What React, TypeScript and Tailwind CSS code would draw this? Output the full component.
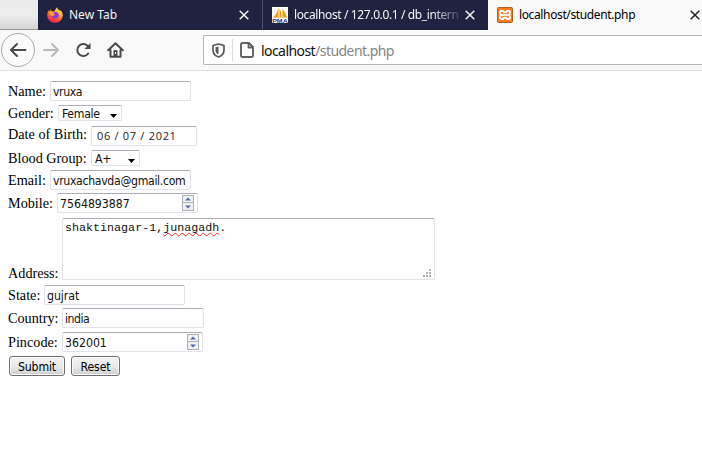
import type { ReactNode } from 'react';

const ui = "font-['Noto_Sans',sans-serif]";
const tahoma = "font-['DejaVu_Sans_Condensed','DejaVu_Sans',sans-serif] text-[12.2px]";
const box = 'box-border shrink-0 rounded-[2px] border border-[#e2e3ea] border-t-[#abadb3] bg-white text-[#111] whitespace-pre';

function Close({ dark = false }: { dark?: boolean }) {
  return (
    <svg className="shrink-0" width="10" height="10" viewBox="0 0 10 10" stroke={dark ? '#222' : '#f2f2f5'} strokeWidth="1.5">
      <path d="M.7.7 9.3 9.3M9.3.7.7 9.3" />
    </svg>
  );
}

function FirefoxLogo() {
  return (
    <svg className="shrink-0" width="16" height="16" viewBox="0 0 16 16">
      <defs>
        <linearGradient id="flame" x1="0.8" y1="0" x2="0.3" y2="1">
          <stop offset="0" stopColor="#fff04a" />
          <stop offset="0.4" stopColor="#ffa52e" />
          <stop offset="0.7" stopColor="#ff5130" />
          <stop offset="1" stopColor="#f5156c" />
        </linearGradient>
      </defs>
      <path fill="url(#flame)" d="M1.6 3.2 2.5 4.4 4 2.2 4.4 4.2 7.3 4.5C8 3 9 1.2 10.1.2c.2 1.5 1.3 2.2 2.2 3.1L13.7 3.6C15 5 15.8 6.600 15.800 8.500A7.800 7.400 0 0 1 .2 8.400C.2 6.600.800 4.800 1.600 3.200Z" />
      <path fill="#7542e5" d="M5.200 6.200 7.400 5.100C9.800 4.200 12 6.200 11.700 8.500 11.400 11 8.700 12 6.500 11 4.900 10.300 4.200 9 4.400 7.500Z" />
      <path fill="#ff9b2f" d="M2.500 6C4 4.200 6.200 4.500 7.500 5.200L6.300 6.300 8.200 7.400C7.700 8.200 6.500 8.400 5.700 9 4.500 9.600 3.300 8.200 2.500 6Z" />
    </svg>
  );
}

function PmaLogo() {
  return (
    <svg className="shrink-0" width="16" height="16" viewBox="0 0 16 16">
      <path fill="#fff" d="M0 0h16v16H0z" />
      <path fill="#f89c0e" d="M6.500 1V10H1.500C3.800 7.800 5.600 4.500 6.500 1ZM7.500 1.500C9 4 9.700 7 9.500 10H7.500ZM10.500 2C12.800 4.200 14.200 7 14.700 10H10.500Z" />
      <path fill="#efb75a" d="M1 10.300h14v.8H1z" />
      <text x="0.200" y="15.800" fontSize="5.600" fontWeight="700" textLength="15.500" lengthAdjust="spacingAndGlyphs" fill="#343575" fontFamily="Liberation Sans, sans-serif">PMA</text>
    </svg>
  );
}

function XamppLogo() {
  return (
    <svg className="shrink-0" width="16" height="16" viewBox="0 0 16 16">
      <rect x=".5" y=".5" width="15" height="15" rx="1" fill="#fb7a24" stroke="#b95a20" />
      <path fill="none" stroke="#fff" strokeWidth="2" d="M4.500 4H6L7 5.300H9L10 4H11.500Q13 4 13 5.600T11.700 8Q13 8.500 13 10.300T11.500 12H10L9 10.700H7L6 12H4.500Q3 12 3 10.300T4.300 8Q3 7.500 3 5.600T4.500 4Z" />
      <path stroke="#fff" strokeWidth="1.700" d="M5.300 8H10.700" />
    </svg>
  );
}

function Toolbar() {
  return (
    <div className="box-border flex h-[41px] w-[702px] items-start border-b border-[#dedee0] bg-[#f9f9fa] text-[#4b4b4d]">
      <div className="ml-px mt-[3px] flex h-[34px] w-[34px] shrink-0 items-center justify-center rounded-full border border-[#aaaaac] bg-[#fcfcfc]">
        <svg width="18" height="16" viewBox="0 0 18 16" fill="none" stroke="currentColor" strokeWidth="2" strokeLinecap="round" strokeLinejoin="round">
          <path d="M16.500 8H2M8 2 2 8l6 6" />
        </svg>
      </div>
      <svg className="ml-[7px] mt-[12px] shrink-0" width="18" height="16" viewBox="0 0 18 16" fill="none" stroke="#b9b9ba" strokeWidth="2" strokeLinecap="round" strokeLinejoin="round">
        <path d="M2 8h14M10 2l6 6-6 6" />
      </svg>
      <svg className="ml-[15px] mt-[12px] shrink-0" width="17" height="16" viewBox="0 0 17 16">
        <path fill="none" stroke="currentColor" strokeWidth="2" strokeLinecap="round" d="M13.200 11.500A6 6 0 1 1 13 4.300" />
        <path fill="currentColor" d="M15.500 1v6H9.500Z" />
      </svg>
      <svg className="ml-[15px] mt-[12px] shrink-0" width="17" height="16" viewBox="0 0 17 16">
        <path fill="none" stroke="currentColor" strokeWidth="2" strokeLinecap="round" strokeLinejoin="round" d="M1.200 8.300 8.500 1.200l7.300 7.100M3.500 8v6.800h10V8" />
        <path fill="currentColor" d="M6.500 15V9q0-1 1-1h2q1 0 1 1v6Z" />
        <path fill="#f9f9fa" d="M8 10h1v2H8z" />
      </svg>
      <div className="ml-[79px] mt-[5px] box-border flex h-[30px] flex-1 items-center rounded-l-[2px] border border-r-0 border-[#b7b7ba] bg-white">
        <svg className="ml-[8px] shrink-0" width="13" height="15" viewBox="0 0 13 15">
          <path fill="none" stroke="#58585a" strokeWidth="1.700" strokeLinejoin="round" d="M6.500 1 12 2.500V7C12 11 9.500 13 6.500 14 3.500 13 1 11 1 7V2.500Z" />
          <path fill="#58585a" d="M6.500 3.500V11.500C4.500 10.500 3.500 9 3.500 7V4.300Z" />
        </svg>
        <div className="ml-[7px] h-[22px] w-px bg-[#dcdcde]" />
        <svg className="ml-[7px] shrink-0" width="14" height="16" viewBox="0 0 14 16" fill="none" stroke="#606062" strokeWidth="1.900" strokeLinejoin="round">
          <path d="M2.500 1H9l4 4v8.500q0 1.500-1.500 1.500h-9Q1 15 1 13.500v-11Q1 1 2.500 1ZM8.500 1.500V5.500H13" />
        </svg>
        <div className={`${ui} ml-[7px] mt-[2px] whitespace-nowrap text-[14px] leading-[20px] tracking-[-0.560px] text-[#858587]`}>
          <span className="text-[#111]">localhost</span>/student.php
        </div>
      </div>
    </div>
  );
}

function Row({ label, gap, labelTop, width, children }: { label: string; gap: string; labelTop: string; width: string; children: ReactNode }) {
  return (
    <div className={`flex items-start pl-2 ${gap}`}>
      <label className={`${labelTop} ${width} shrink-0 whitespace-nowrap font-['Liberation_Serif',serif] text-[14.220px] leading-[16px] text-black`}>{label}</label>
      {children}
    </div>
  );
}

function Field({ value, width = 'w-[141px]', track = '' }: { value: string; width?: string; track?: string }) {
  return <div className={`${box} ${tahoma} ${track} ${width} h-[20px] pl-[2px] leading-[20px]`}>{value}</div>;
}

function Select({ value, width }: { value: string; width: string }) {
  return (
    <div className={`${box} ${tahoma} ${width} flex h-[16px] items-center justify-between pl-[3px] pr-[4px] leading-[15px] tracking-[-0.300px]`}>
      <span className="mt-[2px]">{value}</span>
      <svg className="mt-[5px]" width="7" height="4" viewBox="0 0 7 4"><path d="M0 0h7L3.500 4Z" /></svg>
    </div>
  );
}

function NumberField({ value }: { value: string }) {
  return (
    <div className={`${box} ${tahoma} flex h-[20px] w-[141px] justify-between pl-[2px] pr-[3px] leading-[20px]`}>
      <span>{value}</span>
      <div className="mt-px flex h-[16px] w-[12px] flex-col border border-[#aeb0b5] bg-[#f1f1f2]">
        <div className="flex h-[7px] items-center justify-center border-b border-[#aeb0b5]">
          <svg width="6" height="4" viewBox="0 0 6 4"><path fill="#5269ae" d="M0 3.500 3 .5l3 3Z" /></svg>
        </div>
        <div className="flex h-[7px] items-center justify-center">
          <svg width="6" height="4" viewBox="0 0 6 4"><path fill="#5269ae" d="M0 .5h6l-3 3Z" /></svg>
        </div>
      </div>
    </div>
  );
}

function Button({ children, width }: { children: ReactNode; width: string }) {
  return (
    <button className={`${width} ${tahoma} box-border h-[20px] rounded-[3px] border border-[#707070] bg-linear-to-b from-[#f3f3f3] via-[#ebebeb] to-[#cfcfcf] px-0 pb-0 pt-px text-center leading-[18px] tracking-[-0.150px] text-black shadow-[inset_0_0_0_1px_#fafafa]`}>{children}</button>
  );
}

export default function App() {
  return (
    <div className="h-[449px] w-[702px] overflow-hidden bg-white">
      <div className={`${ui} flex h-[30px] w-[702px] bg-[#20233f] text-[12px] leading-[18px]`}>
        <div className="h-[30px] w-[38px] shrink-0 border-b border-[#999] bg-linear-to-b from-[#ececec] via-[#eee] to-[#d6d6d6]" />
        <div className="box-border flex h-[30px] w-[225px] shrink-0 items-center border-r border-[#50526a] pl-[9px] pr-[13px] text-[#f4f4f6]">
          <FirefoxLogo />
          <span className="ml-[6px] flex-1 whitespace-nowrap">New Tab</span>
          <Close />
        </div>
        <div className="box-border flex h-[30px] w-[225px] shrink-0 items-center pl-[9px] pr-[13px] text-[#f4f4f6]">
          <PmaLogo />
          <span className="ml-[6px] w-[165px] shrink-0 whitespace-nowrap tracking-[-0.380px] [mask-image:linear-gradient(to_right,black_138px,transparent_170px)]">localhost / 127.0.0.1 / db_intern</span>
          <span className="ml-[6px] flex"><Close /></span>
        </div>
        <div className="flex h-[30px] flex-1 items-center bg-[#f9f9fa] pl-[9px] text-black">
          <XamppLogo />
          <span className="ml-[6px] w-[171px] shrink-0 whitespace-nowrap tracking-[-0.370px]">localhost/student.php</span>
          <Close dark />
        </div>
      </div>
      <Toolbar />
      <form className="flex flex-col">
        <Row label="Name:" gap="mt-[10px]" labelTop="mt-[2px]" width="w-[42px]"><Field value="vruxa" track="tracking-[-0.400px]" /></Row>
        <Row label="Gender:" gap="mt-[4px]" labelTop="mt-0" width="w-[50px]"><Select value="Female" width="w-[64px]" /></Row>
        <Row label="Date of Birth:" gap="mt-[5px]" labelTop="mt-0" width="w-[83px]">
          <div className={`${box} h-[20px] w-[106px] pl-[5px] font-['Open_Sans',sans-serif] text-[11px] leading-[17px] tracking-[0.700px] text-[#222]`}>06 / 07 / 2021</div>
        </Row>
        <Row label="Blood Group:" gap="mt-[4px]" labelTop="mt-0" width="w-[83px]"><Select value="A+" width="w-[49px]" /></Row>
        <Row label="Email:" gap="mt-[4px]" labelTop="mt-[2px]" width="w-[42px]"><Field value="vruxachavda@gmail.com" track="tracking-[-0.330px]" /></Row>
        <Row label="Mobile:" gap="mt-[3px]" labelTop="mt-[2px]" width="w-[49px]"><NumberField value="7564893887" /></Row>
        <Row label="Address:" gap="mt-[5px]" labelTop="mt-[47px] mb-[-1px]" width="w-[54px]">
          <div className={`${box} flex h-[62px] w-[373px] items-end justify-between pl-[2px]`}>
            <div className="self-start pt-[2px] font-['Liberation_Mono',monospace] text-[11.700px] leading-[14px]">
              shaktinagar-1,<span className="underline decoration-[#f22] decoration-wavy decoration-[1px] underline-offset-[1px] [text-decoration-skip-ink:none]">junagadh</span>.
            </div>
            <svg className="mb-[2px] mr-[3px]" width="8" height="8" viewBox="0 0 8 8" fill="#b0b0b0">
              <path d="M6 0h2v2H6zM6 3h2v2H6zM6 6h2v2H6zM3 3h2v2H3zM3 6h2v2H3zM0 6h2v2H0z" />
            </svg>
          </div>
        </Row>
        <Row label="State:" gap="mt-[5px]" labelTop="mt-[2px]" width="w-[36px]"><Field value="gujrat" track="tracking-[-0.050px]" /></Row>
        <Row label="Country:" gap="mt-[3px]" labelTop="mt-[2px]" width="w-[54px]"><Field value="india" width="w-[142px]" track="tracking-[-0.500px]" /></Row>
        <Row label="Pincode:" gap="mt-[4px]" labelTop="mt-[2px]" width="w-[54px]"><NumberField value="362001" /></Row>
        <div className="mt-[4px] flex gap-[6px] pl-[9px]">
          <Button width="w-[56px]">Submit</Button>
          <Button width="w-[49px]">Reset</Button>
        </div>
      </form>
    </div>
  );
}
